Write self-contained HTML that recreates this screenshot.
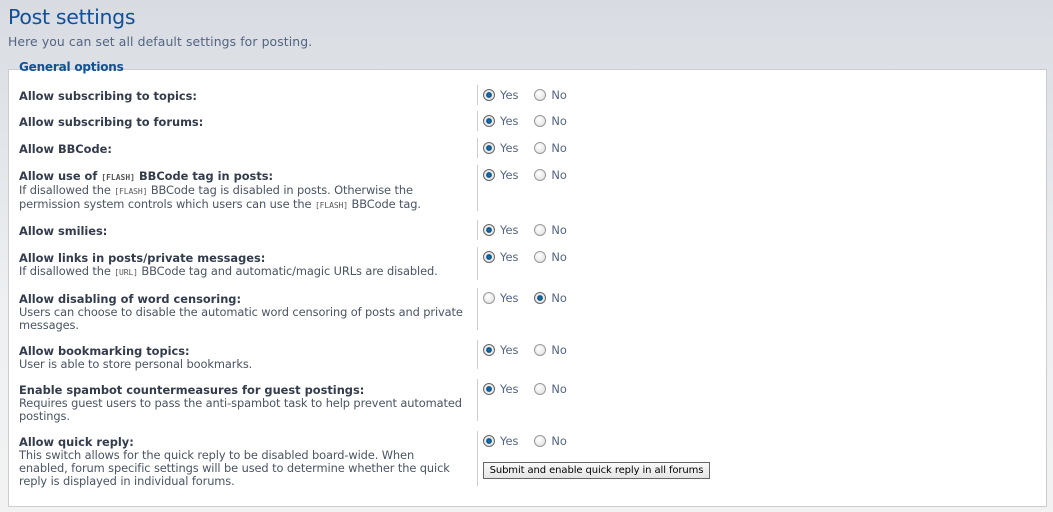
<!DOCTYPE html>
<html><head><meta charset="utf-8"><style>
body{margin:0;width:1053px;height:512px;overflow:hidden;background:linear-gradient(#d8dce2,#eef0f2 60%,#f2f2f2);font-family:"DejaVu Sans","Liberation Sans",sans-serif;position:relative}
h1{position:absolute;left:8px;top:5px;margin:0;font-size:20.5px;font-weight:normal;color:#115098;letter-spacing:-0.3px}
.sub{position:absolute;left:8px;top:34px;font-size:12.4px;color:#536482;letter-spacing:0.1px}
.fs{position:absolute;left:8px;top:69px;width:1037px;height:436px;background:#fff;border:1px solid #ccc}
.lg{position:absolute;left:19px;top:60px;font-size:12px;font-weight:bold;color:#115098;letter-spacing:-0.2px}
.row{position:absolute;left:19px;width:1020px;font-size:11.4px;line-height:13px}
.dt{position:absolute;left:0;top:5px;width:456px;color:#4a5464;letter-spacing:-0.1px}
.dt b{color:#333c4c;letter-spacing:0}
.dt code{font-family:"DejaVu Sans Mono",monospace;font-size:8px;color:#555}
.dv{position:absolute;left:458px;top:0;bottom:0;border-left:1px solid #ccc}
.dd{position:absolute;left:464px;top:4px;color:#536482;white-space:nowrap}
.r{display:inline-block;width:12px;height:12px;border:1px solid #999;border-radius:50%;background:radial-gradient(circle at 40% 35%,#fff,#ddd);vertical-align:-2px;box-sizing:border-box;margin-right:5px}
.r.on{background:radial-gradient(circle,#1a78b8 0,#0b4f80 2.5px,#eee 3.2px,#ddd);border-color:#666}
.no{margin-left:16px}
.btn{position:absolute;left:464px;top:31px;width:227px;height:17px;box-sizing:border-box;border:1px solid #666;background:linear-gradient(#fafafa,#e4e4e4);font-size:10px;line-height:15px;text-align:center;color:#000;white-space:nowrap;letter-spacing:-0.1px}
</style></head><body>
<h1>Post settings</h1>
<div class="sub">Here you can set all default settings for posting.</div>
<div class="fs"></div>
<div class="lg">General options</div>

<div class="row" style="top:85px;height:20px"><div class="dt"><b>Allow subscribing to topics:</b></div><div class="dv"></div><div class="dd"><span class="r on"></span>Yes<span class="r no"></span>No</div></div>
<div class="row" style="top:111px;height:20px"><div class="dt"><b>Allow subscribing to forums:</b></div><div class="dv"></div><div class="dd"><span class="r on"></span>Yes<span class="r no"></span>No</div></div>
<div class="row" style="top:138px;height:20px"><div class="dt"><b>Allow BBCode:</b></div><div class="dv"></div><div class="dd"><span class="r on"></span>Yes<span class="r no"></span>No</div></div>
<div class="row" style="top:165px;height:46px"><div class="dt"><b>Allow use of <code>[FLASH]</code> BBCode tag in posts:</b><br>If disallowed the <code>[FLASH]</code> BBCode tag is disabled in posts. Otherwise the permission system controls which users can use the <code>[FLASH]</code> BBCode tag.</div><div class="dv"></div><div class="dd"><span class="r on"></span>Yes<span class="r no"></span>No</div></div>
<div class="row" style="top:220px;height:20px"><div class="dt"><b>Allow smilies:</b></div><div class="dv"></div><div class="dd"><span class="r on"></span>Yes<span class="r no"></span>No</div></div>
<div class="row" style="top:247px;height:33px"><div class="dt"><b>Allow links in posts/private messages:</b><br>If disallowed the <code>[URL]</code> BBCode tag and automatic/magic URLs are disabled.</div><div class="dv"></div><div class="dd"><span class="r on"></span>Yes<span class="r no"></span>No</div></div>
<div class="row" style="top:288px;height:42px"><div class="dt"><b>Allow disabling of word censoring:</b><br>Users can choose to disable the automatic word censoring of posts and private messages.</div><div class="dv"></div><div class="dd"><span class="r"></span>Yes<span class="r no on"></span>No</div></div>
<div class="row" style="top:340px;height:29px"><div class="dt"><b>Allow bookmarking topics:</b><br>User is able to store personal bookmarks.</div><div class="dv"></div><div class="dd"><span class="r on"></span>Yes<span class="r no"></span>No</div></div>
<div class="row" style="top:379px;height:42px"><div class="dt"><b>Enable spambot countermeasures for guest postings:</b><br>Requires guest users to pass the anti-spambot task to help prevent automated postings.</div><div class="dv"></div><div class="dd"><span class="r on"></span>Yes<span class="r no"></span>No</div></div>
<div class="row" style="top:431px;height:55px"><div class="dt"><b>Allow quick reply:</b><br>This switch allows for the quick reply to be disabled board-wide. When<br>enabled, forum specific settings will be used to determine whether the quick<br>reply is displayed in individual forums.</div><div class="dv"></div><div class="dd"><span class="r on"></span>Yes<span class="r no"></span>No</div><div class="btn">Submit and enable quick reply in all forums</div></div>
</body></html>
